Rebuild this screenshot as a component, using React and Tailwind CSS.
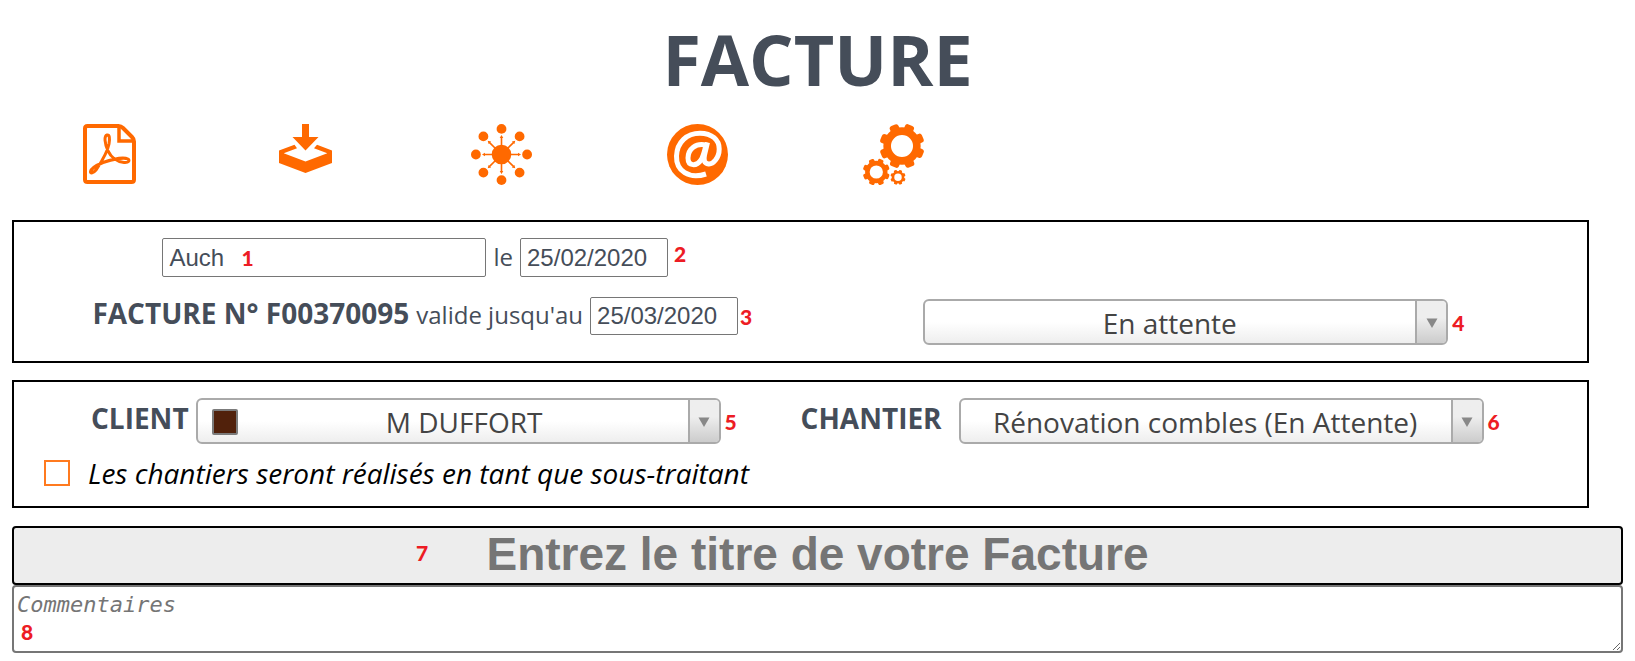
import { useState } from 'react';

const TEETH = [22, 67, 112, 157, 202, 247, 292, 337];
const SPOKES = [0, 45, 90, 135, 180, 225, 270, 315];

function PdfIcon() {
  return (
    <svg width="53" height="60" viewBox="0 0 53 60" fill="none" stroke="#ff6900">
      <path d="M4.5 2H35.5Q38 2 40 4L49 13Q51 15 51 17.5V55.500Q51 58 48.500 58H4.500Q2 58 2 55.500V4.500Q2 2 4.500 2Z" strokeWidth="4" />
      <path d="M36 3V17H51" strokeWidth="3.500" />
      <path
        d="M24 11C21 12 21.500 19 25 27C28 33 34 38 41 38.500C46 39 47 36 45 35C41 33 30 35 20 38.500C14 41 8 45 7.500 47.500C7 50 10.500 49 13 46C17 40 24 30 26 20C27 14 26.500 10.500 24 11Z"
        strokeWidth="3"
      />
    </svg>
  );
}

function DownloadIcon() {
  return (
    <svg width="53" height="49" viewBox="0 0 53 49" fill="#ff6900">
      <path d="M23 0H30V13H39.500L26.500 26.500L13.500 13H23Z" />
      <path d="M0 26.500L15.500 20.700L18 24.300L4.700 29.300L26.500 37.500L48.300 29.300L35 24.300L38 20.700L53 26.500V39L26.500 49L0 39Z" />
    </svg>
  );
}

function NetworkIcon() {
  return (
    <svg width="61" height="61" viewBox="0 0 61 61" fill="#ff6900">
      <circle cx="30.5" cy="30.5" r="9.800" />
      {SPOKES.map((angle) => (
        <g key={angle} transform={`rotate(${angle} 30.5 30.5)`}>
          <circle cx="30.5" cy="4.900" r="4.900" />
          <path d="M29.700 22V14H28.700L30.500 11L32.300 14H31.300V22Z" />
        </g>
      ))}
    </svg>
  );
}

function MailIcon() {
  return (
    <svg width="61" height="61" viewBox="0 0 61 61">
      <circle cx="30.5" cy="30.5" r="30.500" fill="#ff6900" />
      <g fill="none" stroke="#fff" strokeWidth="5">
        <path d="M39 50C22 55.500 9 47 9.500 32C10 18 20 9.200 33 9.200C45 9.200 52.200 16 52.200 25C52.200 34 46 40.500 41.500 40C37 39.500 36.500 36 37.500 31L40.500 18.500" />
        <path d="M39 21C29 18.500 21 25 21 34C21 42.500 29.500 42.500 34 36C36.500 32 37.500 27 39 21Z" />
      </g>
    </svg>
  );
}

function Gear({ cx, cy, r }) {
  return (
    <g>
      <circle cx={cx} cy={cy} r={r * 0.66} fill="none" stroke="#ff6900" strokeWidth={r * 0.34} />
      {TEETH.map((angle) => (
        <rect
          key={angle}
          x={cx - r * 0.21}
          y={cy - r}
          width={r * 0.42}
          height={r * 0.4}
          rx={r * 0.12}
          fill="#ff6900"
          transform={`rotate(${angle} ${cx} ${cy})`}
        />
      ))}
    </g>
  );
}

function GearsIcon() {
  return (
    <svg width="61" height="61" viewBox="0 0 61 61">
      <Gear cx={39} cy={22} r={22.5} />
      <Gear cx={13.3} cy={48} r={13.5} />
      <Gear cx={35} cy={53.3} r={7.6} />
    </svg>
  );
}

const ACTIONS = [
  { label: 'PDF', Icon: PdfIcon },
  { label: 'Enregistrer', Icon: DownloadIcon },
  { label: 'Partager', Icon: NetworkIcon },
  { label: 'Envoyer par e-mail', Icon: MailIcon },
  { label: 'Options', Icon: GearsIcon },
];

function Marker({ children, className }) {
  return (
    <span
      className={`pointer-events-none absolute font-['Lato',sans-serif] text-[21px] leading-6 font-black text-[#ed1c24] ${className}`}
    >
      {children}
    </span>
  );
}

function TextField({ id, value, onChange, className, label }) {
  return (
    <input
      id={id}
      type="text"
      aria-label={label}
      value={value}
      onChange={(e) => onChange(e.target.value)}
      className={`rounded-xs border border-[#767676] bg-white px-[6px] font-['Liberation_Sans',sans-serif] text-[24px] leading-7 outline-none ${className}`}
    />
  );
}

function SelectBox({ id, option, label, swatch, marker }) {
  return (
    <div className="relative w-[525px]">
      <select
        id={id}
        aria-label={label}
        className={`block h-[46px] w-full appearance-none rounded-md border-2 border-[#aaa] bg-linear-to-b from-white from-50% to-[#eee] pt-[2px] pr-8 text-[28px] leading-10 text-[#444] [text-align-last:center] ${swatch ? 'pl-11' : 'pl-0'}`}
      >
        <option>{option}</option>
      </select>
      {swatch && (
        <span className="pointer-events-none absolute top-[11px] left-4 size-[26px] rounded-xs border-2 border-[#7b7b7b] bg-[#51210b]" />
      )}
      <span className="pointer-events-none absolute inset-y-[2px] right-[2px] flex w-[31px] items-center justify-center rounded-r-sm border-l-2 border-[#aaa] bg-linear-to-b from-[#eee] from-40% to-[#ccc] pt-[2px]">
        <svg width="12" height="10" viewBox="0 0 12 10" fill="#888">
          <path d="M0.500 0.500H11.500L6 10Z" />
        </svg>
      </span>
      <Marker className="top-3 left-full ml-1">{marker}</Marker>
    </div>
  );
}

export default function App() {
  const [city, setCity] = useState('Auch');
  const [date, setDate] = useState('25/02/2020');
  const [validUntil, setValidUntil] = useState('25/03/2020');

  return (
    <main className="bg-white px-3 pb-2 font-['Open_Sans',sans-serif] text-[#454d59]">
      <h1 className="pt-[11px] text-center text-[70px] leading-[96px] font-bold">FACTURE</h1>

      <nav className="mt-[17px] -ml-px flex h-[61px]">
        {ACTIONS.map(({ label, Icon }) => (
          <div key={label} className="flex w-[196px] items-start justify-center">
            <button type="button" aria-label={label} className="cursor-pointer">
              <Icon />
            </button>
          </div>
        ))}
      </nav>

      <section className="mt-[35px] mr-[34px] flex border-2 border-black py-4 text-[24px] leading-8">
        <div className="flex w-1/2 shrink-0 grow flex-col items-center gap-5 pb-[10px] pl-4">
          <div className="flex items-baseline gap-[7px]">
            <span className="relative">
              <TextField label="Ville" value={city} onChange={setCity} className="h-[39px] w-[324px]" />
              <Marker className="top-2 left-[79px]">1</Marker>
            </span>
            <label htmlFor="date">le</label>
            <span className="relative">
              <TextField id="date" value={date} onChange={setDate} className="h-[39px] w-[148px]" />
              <Marker className="top-1 left-full ml-[6px]">2</Marker>
            </span>
          </div>
          <div className="flex items-baseline gap-[7px]">
            <strong className="text-[28px] font-bold">FACTURE N° F00370095</strong>
            <label htmlFor="valid-until">valide jusqu'au</label>
            <span className="relative">
              <TextField
                id="valid-until"
                value={validUntil}
                onChange={setValidUntil}
                className="h-[38px] w-[148px]"
              />
              <Marker className="top-2 left-full ml-[2px]">3</Marker>
            </span>
          </div>
        </div>
        <div className="flex w-1/2 items-end justify-center pr-4">
          <SelectBox label="Statut" option="En attente" marker="4" />
        </div>
      </section>

      <section className="mt-[17px] mr-[34px] border-2 border-black pt-4 pb-[15px]">
        <div className="flex items-start pl-[77px] text-[28px] leading-10">
          <label htmlFor="client" className="mr-[7px] font-bold">
            CLIENT
          </label>
          <SelectBox id="client" option="M DUFFORT" swatch marker="5" />
          <label htmlFor="chantier" className="mr-[17px] ml-20 font-bold">
            CHANTIER
          </label>
          <SelectBox id="chantier" option="Rénovation combles (En Attente)" marker="6" />
        </div>
        <label className="mt-[11px] flex items-center gap-[18px] pl-[30px] text-[28px] leading-9 text-black italic">
          <input type="checkbox" className="size-[26px] appearance-none border-2 border-[#ff7a1f] bg-white" />
          Les chantiers seront réalisés en tant que sous-traitant
        </label>
      </section>

      <div className="relative mt-[18px]">
        <input
          type="text"
          aria-label="Titre"
          placeholder="Entrez le titre de votre Facture"
          className="block h-[59px] w-full rounded-sm border-2 border-black bg-[#ededed] pb-1 text-center font-['Liberation_Sans',sans-serif] text-[46px] leading-[50px] font-bold placeholder:text-[#757575]"
        />
        <Marker className="top-[15px] left-[404px]">7</Marker>
      </div>
      <div className="relative">
        <textarea
          aria-label="Commentaires"
          placeholder="Commentaires"
          className="block h-[68px] w-full resize rounded-sm border-2 border-[#767676] bg-white px-[3px] pt-1 font-['DejaVu_Sans_Mono',monospace] text-[22px] leading-7 italic placeholder:text-[#757575]"
        />
        <Marker className="top-[35px] left-[9px]">8</Marker>
      </div>
    </main>
  );
}
